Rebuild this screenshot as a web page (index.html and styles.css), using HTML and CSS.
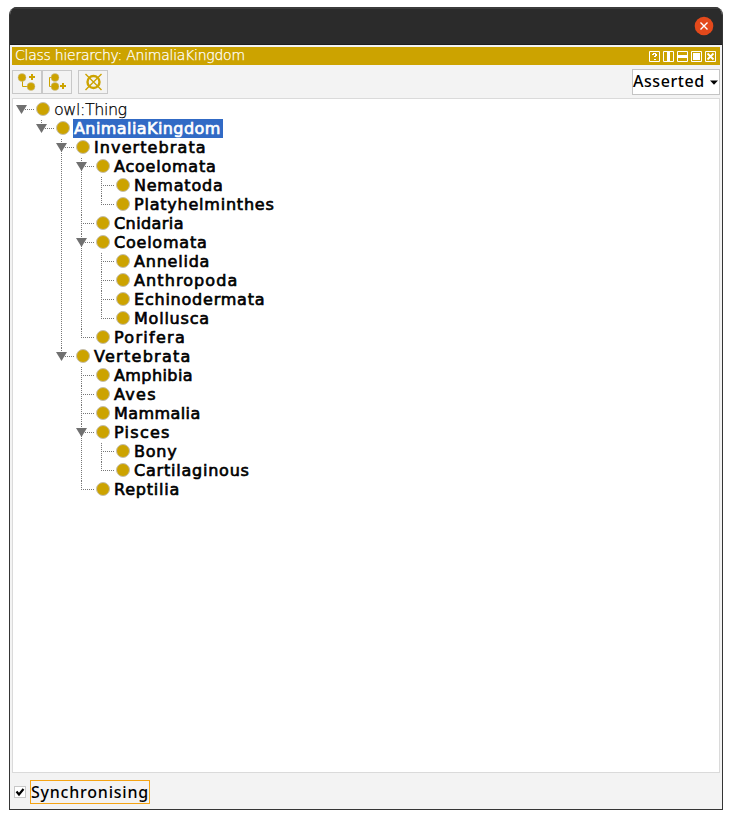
FILE: index.html
```html
<!DOCTYPE html>
<html lang="en">
<head>
<meta charset="utf-8">
<title>Class hierarchy</title>
<link rel="stylesheet" href="styles.css">
</head>
<body>
<div class="window">
  <header class="titlebar">
    <button class="close" aria-label="Close"><svg width="20" height="20" viewBox="0 0 20 20"><circle cx="10" cy="10" r="9.3" fill="#e3491b"/><path d="M6.5 6.5l7 7m0-7l-7 7" stroke="#fff" stroke-width="1.4"/></svg></button>
  </header>
  <main class="panel">
    <div class="view-title">
      <span class="view-name">Class hierarchy: AnimaliaKingdom</span>
      <span class="view-buttons">
        <svg width="11" height="11" viewBox="0 0 11 11"><path class="w" d="M.5.5h10v10H.5z"/><path d="M4 2h3v1H4zM3 3h2v1H3zM6 3h2v2H6zM5 5h2v1H5zM5 8h2v1H5z" fill="#fff"/></svg>
        <svg width="11" height="11" viewBox="0 0 11 11"><path class="w" d="M.5.5h10v10H.5z"/><path d="M4 0h3v11H4z" fill="#fff"/></svg>
        <svg width="11" height="11" viewBox="0 0 11 11"><path class="w" d="M.5.5h10v10H.5z"/><path d="M0 4h11v3H0z" fill="#fff"/></svg>
        <svg width="11" height="11" viewBox="0 0 11 11"><path class="w" d="M.5.5h10v10H.5z"/><path d="M2 2h7v7H2z" fill="#fff"/></svg>
        <svg width="11" height="11" viewBox="0 0 11 11"><path class="w" d="M.5.5h10v10H.5z"/><path class="w x" d="M2.5 2.5l6 6m0-6l-6 6"/></svg>
      </span>
    </div>
    <div class="toolbar">
      <button class="tool" aria-label="Add subclass"><svg width="28" height="22" viewBox="0 0 28 22"><path d="M9.5 8v7.5H16" fill="none" stroke="#cca300"/><path d="M16 6h6M19 3v6" stroke="#cca300" stroke-width="2"/><circle class="node" cx="9" cy="6.5" r="4"/><circle class="node" cx="18" cy="15.5" r="4"/></svg></button>
      <button class="tool" aria-label="Add sibling"><svg width="28" height="22" viewBox="0 0 28 22"><path d="M9 6.5H6.5v9H9" fill="none" stroke="#cca300"/><path d="M17 15h6M20 12v6" stroke="#cca300" stroke-width="2"/><circle class="node" cx="12" cy="6.5" r="4"/><circle class="node" cx="12" cy="15.5" r="4"/></svg></button>
      <button class="tool delete" aria-label="Delete"><svg width="28" height="22" viewBox="0 0 28 22"><circle cx="14.5" cy="11" r="6" fill="none" stroke="#cca300" stroke-width="2.4"/><path d="M6.5 3l16 16m0-16l-16 16" stroke="#cca300" stroke-width="1.4"/></svg></button>
      <div class="combo"><span>Asserted</span><svg width="8" height="5" viewBox="0 0 8 5"><path d="M0 .5h8L4 4.8z"/></svg></div>
    </div>
    <div class="tree-box">
      <ul class="tree">
        <li class="open"><div class="row"><i class="dot"></i><span class="label light">owl:Thing</span></div>
          <ul>
            <li class="open"><div class="row"><i class="dot"></i><span class="label selected snug">AnimaliaKingdom</span></div>
              <ul>
                <li class="open"><div class="row"><i class="dot"></i><span class="label loose">Invertebrata</span></div>
                  <ul>
                    <li class="open"><div class="row"><i class="dot"></i><span class="label">Acoelomata</span></div>
                      <ul>
                        <li><div class="row"><i class="dot"></i><span class="label">Nematoda</span></div></li>
                        <li><div class="row"><i class="dot"></i><span class="label">Platyhelminthes</span></div></li>
                      </ul>
                    </li>
                    <li><div class="row"><i class="dot"></i><span class="label snug">Cnidaria</span></div></li>
                    <li class="open"><div class="row"><i class="dot"></i><span class="label">Coelomata</span></div>
                      <ul>
                        <li><div class="row"><i class="dot"></i><span class="label">Annelida</span></div></li>
                        <li><div class="row"><i class="dot"></i><span class="label loose">Anthropoda</span></div></li>
                        <li><div class="row"><i class="dot"></i><span class="label">Echinodermata</span></div></li>
                        <li><div class="row"><i class="dot"></i><span class="label">Mollusca</span></div></li>
                      </ul>
                    </li>
                    <li><div class="row"><i class="dot"></i><span class="label wide">Porifera</span></div></li>
                  </ul>
                </li>
                <li class="open"><div class="row"><i class="dot"></i><span class="label wide">Vertebrata</span></div>
                  <ul>
                    <li><div class="row"><i class="dot"></i><span class="label snug">Amphibia</span></div></li>
                    <li><div class="row"><i class="dot"></i><span class="label wide">Aves</span></div></li>
                    <li><div class="row"><i class="dot"></i><span class="label snug">Mammalia</span></div></li>
                    <li class="open"><div class="row"><i class="dot"></i><span class="label wide">Pisces</span></div>
                      <ul>
                        <li><div class="row"><i class="dot"></i><span class="label">Bony</span></div></li>
                        <li><div class="row"><i class="dot"></i><span class="label">Cartilaginous</span></div></li>
                      </ul>
                    </li>
                    <li><div class="row"><i class="dot"></i><span class="label">Reptilia</span></div></li>
                  </ul>
                </li>
              </ul>
            </li>
          </ul>
        </li>
      </ul>
    </div>
    <footer class="sync">
      <span class="check"><svg width="10" height="10" viewBox="0 0 10 10"><path d="M1.5 4.5l2.5 3 4.5-5.5" fill="none" stroke="#000" stroke-width="2.1"/></svg></span>
      <span class="sync-label">Synchronising</span>
    </footer>
  </main>
</div>
</body>
</html>
```
FILE: styles.css
```css
* { box-sizing: border-box; }
body { margin: 0; background: #fff; font-family: "DejaVu Sans", sans-serif; font-size: 15px; color: #000; }
svg { display: block; }
button { padding: 0; border: 0; background: none; }
.window { width: 714px; height: 803px; margin: 7px 0 0 9px; border: 1px solid #353535; border-top: 0; border-radius: 8px 8px 0 0; background: #f3f3f3; display: flex; flex-direction: column; overflow: hidden; }
.titlebar { height: 38px; background: #2b2b2b; border-top: 2px solid #3b3b3b; border-bottom: 1px solid #1d1d1d; display: flex; align-items: center; justify-content: flex-end; padding-right: 8px; }
.close { margin-top: -2px; }
.panel { flex: 1; display: flex; flex-direction: column; padding: 2px 2px 0; }
.view-title { height: 18px; background: #cca300; display: flex; align-items: center; justify-content: space-between; padding: 0 4px 0 3px; color: #fff; }
.view-name { font-weight: 200; font-size: 14px; line-height: 16px; height: 18px; letter-spacing: -.25px; white-space: nowrap; -webkit-text-stroke: .25px #fff; }
.view-buttons { display: flex; gap: 3px; padding-top: 1px; }
.w { fill: none; stroke: #fff; stroke-width: 1; }
.x { stroke-width: 1.8; }
.toolbar { height: 33px; display: flex; align-items: flex-start; padding-top: 5px; }
.tool { width: 30px; height: 24px; border: 1px solid #c8c8c8; }
.delete { margin-left: 6px; }
.node { fill: #cca300; stroke: #c9c4b4; stroke-width: .5; }
.combo { margin: -1px 0 0 auto; width: 88px; height: 26px; border: 1px solid #c4c4c4; background: #fff; display: flex; align-items: center; justify-content: space-between; padding-right: 1px; font: 500 16px/22px "Noto Sans", sans-serif; letter-spacing: .55px; }
.combo span { height: 24px; }
.tree-box { height: 675px; border: 1px solid #dadada; background: #fff; padding: 1px 0 0 4px; }
.tree, .tree ul { list-style: none; margin: 0; padding: 0; }
.tree ul { margin-left: 20px; }
.tree li { position: relative; }
.tree ul > li::before { content: ""; position: absolute; left: 4px; top: 1px; bottom: -1px; border-left: 1px dotted #777; }
.tree ul > li:last-child::before { bottom: auto; height: 9px; }
.row { position: relative; height: 19px; display: flex; align-items: center; padding-left: 19px; }
.row::before { content: ""; position: absolute; left: 4px; top: 9px; width: 13px; border-top: 1px dotted #777; }
.open > .row::after { content: ""; position: absolute; left: -1px; top: 5px; width: 11px; height: 9px; background: #707070; clip-path: polygon(0 0, 100% 0, 50% 100%); }
.dot { width: 14px; height: 14px; border-radius: 50%; background: #cca300; border: 1px solid #c5bfae; flex: none; margin-bottom: 1px; }
.label { margin-left: 3px; padding: 0 2px 0 1px; height: 19px; line-height: 20px; font-size: 16px; letter-spacing: .78px; white-space: nowrap; -webkit-text-stroke: .65px currentColor; }
.snug { letter-spacing: .42px; }
.loose { letter-spacing: 1.1px; }
.wide { letter-spacing: 1.28px; }
.light { font-weight: 200; letter-spacing: -.45px; -webkit-text-stroke: .25px #000; }
.selected { background: #316ac5; color: #fff; }
.sync { flex: 1; display: flex; align-items: center; padding: 2px 0 0 2px; }
.check { width: 12px; height: 12px; border: 1px solid #c8c8c8; background: #fff; margin-right: 4px; }
.sync-label { width: 120px; height: 24px; border: 1px solid #f5a414; font: 500 16px/22px "Noto Sans", sans-serif; letter-spacing: .78px; white-space: nowrap; }
```
